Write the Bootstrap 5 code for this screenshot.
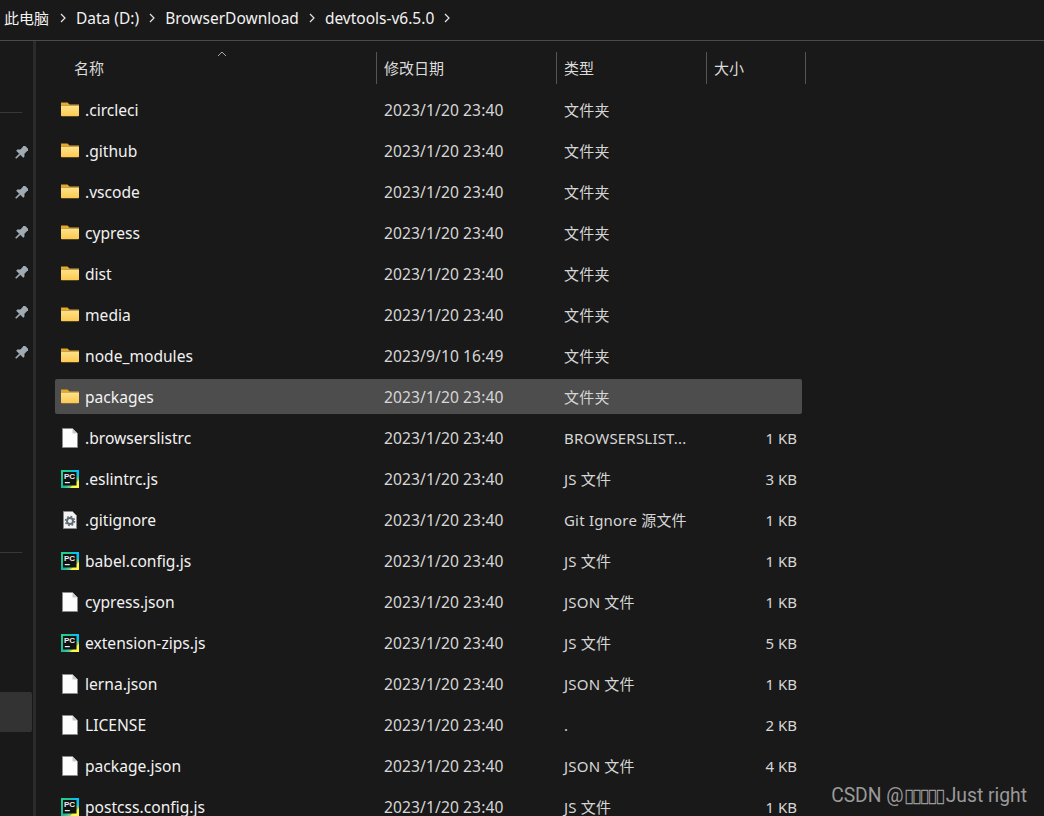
<!DOCTYPE html>
<html lang="zh-CN">
<head>
  <meta charset="UTF-8"/>
  <meta name="viewport" content="width=device-width, initial-scale=1.0"/>
  <title>devtools-v6.5.0</title>
  <link href="https://cdn.jsdelivr.net/npm/bootstrap@5.3.2/dist/css/bootstrap.min.css" rel="stylesheet"/>
  <style>
    html, body { height: 100%; }
    body {
      background: #191919; color: #f2f2f2; overflow: hidden;
      font: 15px/20px "Noto Sans", "Noto Sans CJK SC", sans-serif;
    }
    .crumbs { height: 41px; padding: 0 0 5px 4px; border-bottom: 1px solid #4a4a4a; font-size: 15.5px; }
    .crumb-first { font-size: 15px; margin-right: 1px; }
    .crumb-sep { width: 6px; height: 10px; margin: 0 10px; }
    .explorer { height: 775px; }
    .side-pane { width: 36px; flex: none; border-right: 3px solid #2b2b2b; }
    .side-rule { height: 1px; background: #383838; width: 22px; }
    .rule-top { margin-top: 71px; margin-bottom: 20px; }
    .rule-low { margin-top: 179px; }
    .pin-slot { height: 40px; padding-left: 14px; }
    .side-active { height: 40px; width: 32px; margin-top: 139px; background: #333; border-radius: 0 2px 2px 0; }
    .pane { padding-left: 19px; }
    .head-row { height: 32px; margin-top: 11px; margin-bottom: 8px; color: #dcdcdc; }
    .cell-name { width: 321px; padding-left: 19px; }
    .cell-date { width: 180px; padding-left: 7px; }
    .cell-type { width: 150px; padding-left: 7px; }
    .cell-size { width: 100px; padding-left: 7px; }
    .head-row > div + div { border-left: 1px solid #555; }
    .head-row .cell-size { border-right: 1px solid #555; }
    .sort-up { top: -1px; left: 162px; width: 10px; height: 6px; }
    .file-row { height: 35px; width: 747px; margin-bottom: 6px; border-radius: 2px; }
    .file-row.picked { background: #4d4d4d; }
    .file-row .cell-name { width: 322px; padding-left: 5px; font-size: 15.6px; }
    .file-row .cell-date { width: 180px; padding-left: 7px; color: #d6d6d6; font-size: 15.6px; letter-spacing: .1px; }
    .file-row .cell-type { width: 150px; padding-left: 7px; color: #d6d6d6; letter-spacing: .2px; }
    .file-row .cell-size { width: 95px; padding: 0 5px 0 0; text-align: right; color: #d6d6d6; }
    .ficon { width: 20px; height: 20px; margin-right: 5px; flex: none; }
    .stamp {
      right: 17px; bottom: 8px; color: #9a9a9a;
      font: 19.3px/24px Roboto, "Liberation Sans", "DejaVu Sans", sans-serif;
    }
    .stamp-boxes { letter-spacing: -2.8px; margin-right: 3px; }
  </style>
</head>
<body>
  <svg width="0" height="0" class="position-absolute">
    <defs>
      <linearGradient id="folderFill" x1="0" y1="0" x2="0" y2="1">
        <stop offset="0" stop-color="#ffe28a"/><stop offset="1" stop-color="#fcc94f"/>
      </linearGradient>
      <linearGradient id="pcFrame" x1="0" y1="0" x2="1" y2="1">
        <stop offset="0" stop-color="#21d789"/><stop offset=".55" stop-color="#19b8a0"/><stop offset="1" stop-color="#fcf84a"/>
      </linearGradient>
      <symbol id="i-folder" viewBox="0 0 20 20">
        <path d="M1 2.5h6.5l2 2H19v1H1z" fill="#e8a825"/>
        <path d="M1 5.5h18v10a.8.8 0 0 1-.8.8H1.8a.8.8 0 0 1-.8-.8z" fill="url(#folderFill)"/>
      </symbol>
      <symbol id="i-file" viewBox="0 0 20 20">
        <path d="M2.5 .5h10l5 5v14h-15z" fill="#fdfdfd" stroke="#8a8a8a"/>
        <path d="M12.5 .5v5h5z" fill="#c9c9c9"/>
      </symbol>
      <symbol id="i-pc" viewBox="0 0 20 20">
        <rect x="1" y="1" width="18" height="18" fill="url(#pcFrame)"/>
        <path d="M11 1h8v8z" fill="#07c3f2"/>
        <path d="M19 11v8h-9z" fill="#fcf84a"/>
        <rect x="3" y="3" width="13.5" height="13.5" fill="#111"/>
        <text x="3.9" y="10.2" font-size="8" font-weight="700" fill="#eee" font-family="Liberation Sans, sans-serif">PC</text>
        <rect x="4.8" y="13" width="5" height="1.2" fill="#eee"/>
      </symbol>
      <symbol id="i-gear" viewBox="0 0 20 20">
        <path d="M3.5 1.5h9l4 4v13h-13z" fill="#f4f4f4" stroke="#8a8a8a"/>
        <circle cx="10" cy="11" r="3" fill="none" stroke="#5f6b74" stroke-width="2"/>
        <circle cx="10" cy="11" r="4.6" fill="none" stroke="#5f6b74" stroke-width="1.4" stroke-dasharray="1.8 1.8"/>
      </symbol>
      <symbol id="i-pin" viewBox="0 0 14 14">
        <g transform="rotate(45 7 7)" fill="#a0aab3">
          <path d="M3.2 -1h7.6v1.4l-.9.8V5l2.1 2.2v1.6H2V7.2l2.1-2.2V1.2l-.9-.8z"/>
          <path d="M6.2 8.5h1.6v6H6.2z"/>
        </g>
      </symbol>
      <symbol id="i-sep" viewBox="0 0 6 10">
        <path d="M1 1l4 4-4 4" fill="none" stroke="#e6e6e6" stroke-width="1.2"/>
      </symbol>
    </defs>
  </svg>

  <nav class="crumbs d-flex align-items-center">
    <span class="crumb-first">此电脑</span><svg class="crumb-sep"><use href="#i-sep"/></svg>
    <span>Data (D:)</span><svg class="crumb-sep"><use href="#i-sep"/></svg>
    <span>BrowserDownload</span><svg class="crumb-sep"><use href="#i-sep"/></svg>
    <span>devtools-v6.5.0</span><svg class="crumb-sep"><use href="#i-sep"/></svg>
  </nav>

  <div class="explorer d-flex">
    <aside class="side-pane d-flex flex-column">
      <div class="side-rule rule-top"></div>
      <div class="pin-slot d-flex align-items-center"><svg width="14" height="14"><use href="#i-pin"/></svg></div>
      <div class="pin-slot d-flex align-items-center"><svg width="14" height="14"><use href="#i-pin"/></svg></div>
      <div class="pin-slot d-flex align-items-center"><svg width="14" height="14"><use href="#i-pin"/></svg></div>
      <div class="pin-slot d-flex align-items-center"><svg width="14" height="14"><use href="#i-pin"/></svg></div>
      <div class="pin-slot d-flex align-items-center"><svg width="14" height="14"><use href="#i-pin"/></svg></div>
      <div class="pin-slot d-flex align-items-center"><svg width="14" height="14"><use href="#i-pin"/></svg></div>
      <div class="side-rule rule-low"></div>
      <div class="side-active"></div>
    </aside>

    <main class="pane flex-grow-1">
      <div class="head-row d-flex position-relative">
        <div class="cell-name d-flex align-items-center position-relative">名称
          <svg class="sort-up position-absolute" viewBox="0 0 10 6"><path d="M1 5l4-4 4 4" fill="none" stroke="#aaa"/></svg>
        </div>
        <div class="cell-date d-flex align-items-center">修改日期</div>
        <div class="cell-type d-flex align-items-center">类型</div>
        <div class="cell-size d-flex align-items-center">大小</div>
      </div>

      <div class="file-row d-flex align-items-center"><div class="cell-name d-flex align-items-center"><svg class="ficon"><use href="#i-folder"/></svg>.circleci</div><div class="cell-date">2023/1/20 23:40</div><div class="cell-type">文件夹</div><div class="cell-size"></div></div>
      <div class="file-row d-flex align-items-center"><div class="cell-name d-flex align-items-center"><svg class="ficon"><use href="#i-folder"/></svg>.github</div><div class="cell-date">2023/1/20 23:40</div><div class="cell-type">文件夹</div><div class="cell-size"></div></div>
      <div class="file-row d-flex align-items-center"><div class="cell-name d-flex align-items-center"><svg class="ficon"><use href="#i-folder"/></svg>.vscode</div><div class="cell-date">2023/1/20 23:40</div><div class="cell-type">文件夹</div><div class="cell-size"></div></div>
      <div class="file-row d-flex align-items-center"><div class="cell-name d-flex align-items-center"><svg class="ficon"><use href="#i-folder"/></svg>cypress</div><div class="cell-date">2023/1/20 23:40</div><div class="cell-type">文件夹</div><div class="cell-size"></div></div>
      <div class="file-row d-flex align-items-center"><div class="cell-name d-flex align-items-center"><svg class="ficon"><use href="#i-folder"/></svg>dist</div><div class="cell-date">2023/1/20 23:40</div><div class="cell-type">文件夹</div><div class="cell-size"></div></div>
      <div class="file-row d-flex align-items-center"><div class="cell-name d-flex align-items-center"><svg class="ficon"><use href="#i-folder"/></svg>media</div><div class="cell-date">2023/1/20 23:40</div><div class="cell-type">文件夹</div><div class="cell-size"></div></div>
      <div class="file-row d-flex align-items-center"><div class="cell-name d-flex align-items-center"><svg class="ficon"><use href="#i-folder"/></svg>node_modules</div><div class="cell-date">2023/9/10 16:49</div><div class="cell-type">文件夹</div><div class="cell-size"></div></div>
      <div class="file-row picked d-flex align-items-center"><div class="cell-name d-flex align-items-center"><svg class="ficon"><use href="#i-folder"/></svg>packages</div><div class="cell-date">2023/1/20 23:40</div><div class="cell-type">文件夹</div><div class="cell-size"></div></div>
      <div class="file-row d-flex align-items-center"><div class="cell-name d-flex align-items-center"><svg class="ficon"><use href="#i-file"/></svg>.browserslistrc</div><div class="cell-date">2023/1/20 23:40</div><div class="cell-type">BROWSERSLIST...</div><div class="cell-size">1 KB</div></div>
      <div class="file-row d-flex align-items-center"><div class="cell-name d-flex align-items-center"><svg class="ficon"><use href="#i-pc"/></svg>.eslintrc.js</div><div class="cell-date">2023/1/20 23:40</div><div class="cell-type">JS 文件</div><div class="cell-size">3 KB</div></div>
      <div class="file-row d-flex align-items-center"><div class="cell-name d-flex align-items-center"><svg class="ficon"><use href="#i-gear"/></svg>.gitignore</div><div class="cell-date">2023/1/20 23:40</div><div class="cell-type">Git Ignore 源文件</div><div class="cell-size">1 KB</div></div>
      <div class="file-row d-flex align-items-center"><div class="cell-name d-flex align-items-center"><svg class="ficon"><use href="#i-pc"/></svg>babel.config.js</div><div class="cell-date">2023/1/20 23:40</div><div class="cell-type">JS 文件</div><div class="cell-size">1 KB</div></div>
      <div class="file-row d-flex align-items-center"><div class="cell-name d-flex align-items-center"><svg class="ficon"><use href="#i-file"/></svg>cypress.json</div><div class="cell-date">2023/1/20 23:40</div><div class="cell-type">JSON 文件</div><div class="cell-size">1 KB</div></div>
      <div class="file-row d-flex align-items-center"><div class="cell-name d-flex align-items-center"><svg class="ficon"><use href="#i-pc"/></svg>extension-zips.js</div><div class="cell-date">2023/1/20 23:40</div><div class="cell-type">JS 文件</div><div class="cell-size">5 KB</div></div>
      <div class="file-row d-flex align-items-center"><div class="cell-name d-flex align-items-center"><svg class="ficon"><use href="#i-file"/></svg>lerna.json</div><div class="cell-date">2023/1/20 23:40</div><div class="cell-type">JSON 文件</div><div class="cell-size">1 KB</div></div>
      <div class="file-row d-flex align-items-center"><div class="cell-name d-flex align-items-center"><svg class="ficon"><use href="#i-file"/></svg>LICENSE</div><div class="cell-date">2023/1/20 23:40</div><div class="cell-type">.</div><div class="cell-size">2 KB</div></div>
      <div class="file-row d-flex align-items-center"><div class="cell-name d-flex align-items-center"><svg class="ficon"><use href="#i-file"/></svg>package.json</div><div class="cell-date">2023/1/20 23:40</div><div class="cell-type">JSON 文件</div><div class="cell-size">4 KB</div></div>
      <div class="file-row d-flex align-items-center"><div class="cell-name d-flex align-items-center"><svg class="ficon"><use href="#i-pc"/></svg>postcss.config.js</div><div class="cell-date">2023/1/20 23:40</div><div class="cell-type">JS 文件</div><div class="cell-size">1 KB</div></div>
    </main>
  </div>

  <div class="stamp position-absolute">CSDN @<span class="stamp-boxes">▯▯▯▯▯</span>Just right</div>
  <script src="https://cdn.jsdelivr.net/npm/bootstrap@5.3.2/dist/js/bootstrap.bundle.min.js"></script>
</body>
</html>
